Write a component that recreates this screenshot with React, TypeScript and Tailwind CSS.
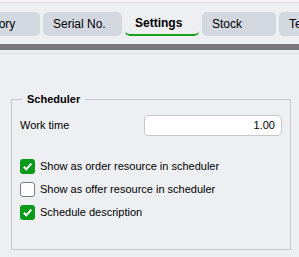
import React from "react";

const tabs = [
  { label: "History", w: "w-[72px]", ml: "-ml-[32px]" },
  { label: "Serial No.", w: "w-[79px]" },
  { label: "Settings", w: "w-[74px]", active: true },
  { label: "Stock", w: "w-[74px]" },
  { label: "Text", w: "w-[74px]" },
];

function Check({ checked }: { checked: boolean }) {
  if (!checked) {
    return <div className="w-[15px] h-[15px] rounded-[3px] border border-[#7a7a7a] bg-white shrink-0" />;
  }
  return (
    <div className="w-[15px] h-[15px] rounded-[3px] bg-[#0a9a1a] flex items-center justify-center shrink-0">
      <svg width="11" height="11" viewBox="0 0 11 11">
        <path d="M1.8 5.8 L4.3 8.3 L9.3 2.6" fill="none" stroke="white" strokeWidth="2" />
      </svg>
    </div>
  );
}

export default function App() {
  const options = [
    { label: "Show as order resource in scheduler", checked: true },
    { label: "Show as offer resource in scheduler", checked: false },
    { label: "Schedule description", checked: true },
  ];

  return (
    <div className="w-[299px] h-[257px] bg-[#eeeff3] overflow-hidden text-[11px] text-black" style={{ fontFamily: '"Liberation Sans", Arial, sans-serif' }}>
      <div className="h-[3px] bg-[#f6f6f8] border-b border-[#dcdcdc]" />
      <div className="flex gap-[3px] pt-[9px] h-[38px] items-start">
        {tabs.map((t) => (
          <div
            key={t.label}
            className={`${t.w} ${t.ml ?? ""} shrink-0 h-[24px] rounded-[5px] flex items-center pl-[10px] text-[12px] whitespace-nowrap overflow-hidden ${
              t.active ? "bg-[#eeeff3] font-bold border-b-2 border-[#18a018]" : "bg-[#d2d7e0]"
            }`}
          >
            {t.label}
          </div>
        ))}
      </div>
      <div className="h-[6px] bg-[#787878] mt-[3px]" />
      <div className="h-[3px]" />
      <div className="border-t border-[#e2e3e6]" />

      <fieldset className="ml-[11px] mr-[8px] mt-[37px] border border-[#c6c6c6] h-[159px] px-[8px] pt-[7px]">
        <legend className="ml-[2px] px-[5px] font-bold text-[11px]">Scheduler</legend>
        <div className="flex items-center justify-between">
          <span>Work time</span>
          <div className="w-[138px] h-[21px] bg-white border border-[#c8c8c8] rounded-[4px] flex items-center justify-end px-[6px]">
            1.00
          </div>
        </div>
        <div className="flex flex-col gap-[8px] mt-[23px]">
          {options.map((o) => (
            <label key={o.label} className="flex items-center gap-[5px] h-[15px]">
              <Check checked={o.checked} />
              <span>{o.label}</span>
            </label>
          ))}
        </div>
      </fieldset>
    </div>
  );
}
